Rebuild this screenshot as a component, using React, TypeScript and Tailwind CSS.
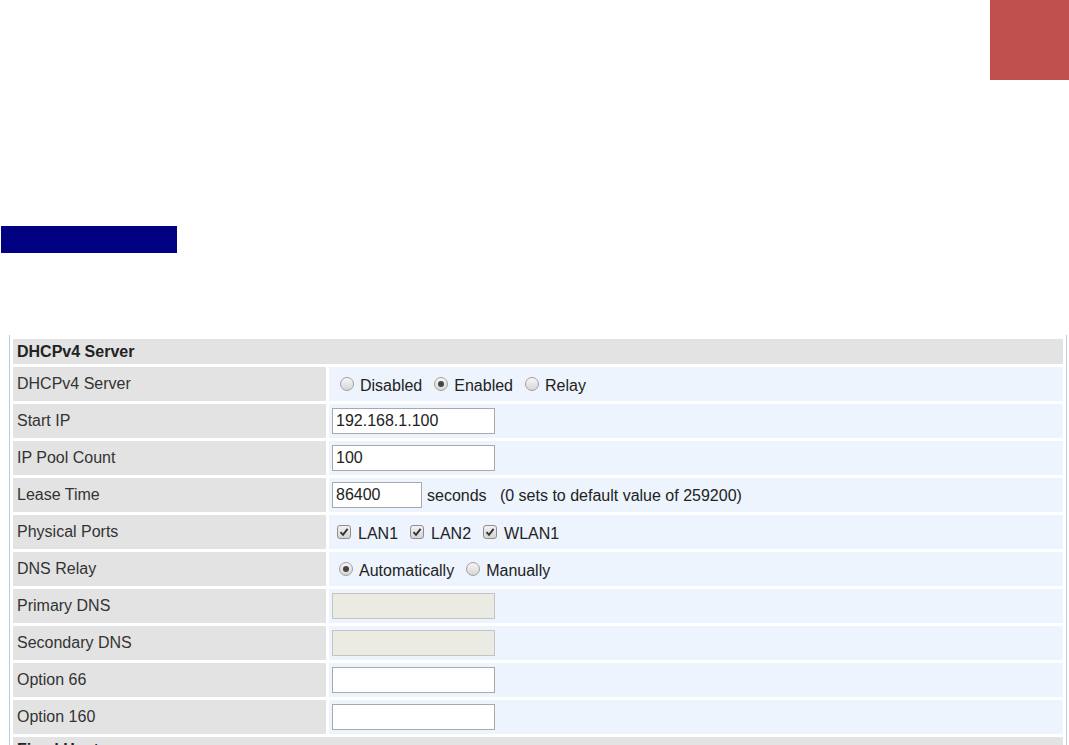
import React from 'react';

const Radio = ({ checked, label }: { checked?: boolean; label: string }) => (
  <span className="flex items-center">
    <span className="w-[14px] h-[14px] rounded-full border border-[#a0a0a0] bg-gradient-to-b from-[#f6f6f6] to-[#d6d6d6] flex items-center justify-center">
      {checked && <span className="w-[6px] h-[6px] rounded-full bg-[#444]" />}
    </span>
    <span className="ml-[6px] mt-[3px]">{label}</span>
  </span>
);

const Check = ({ label }: { label: string }) => (
  <span className="flex items-center">
    <span className="w-[14px] h-[14px] rounded-[3px] border border-[#8f8f8f] bg-gradient-to-b from-[#f2f2f2] to-[#d4d4d4] flex items-center justify-center">
      <svg width="10" height="10" viewBox="0 0 10 10">
        <path d="M1.5 5.2 L4 7.8 L8.6 1.8" fill="none" stroke="#333" strokeWidth="1.9" />
      </svg>
    </span>
    <span className="ml-[7px] mt-[3px]">{label}</span>
  </span>
);

const TextBox = ({ value = '', width = 'w-[163px]', disabled }: { value?: string; width?: string; disabled?: boolean }) => (
  <input
    readOnly
    value={value}
    className={`${width} h-[26px] px-[3px] text-[16px] text-[#222] outline-none border ${
      disabled ? 'bg-[#ebebe4] border-[#c4c4c4]' : 'bg-white border-[#a9a9a9]'
    }`}
  />
);

const rows: { label: string; value: React.ReactNode }[] = [
  {
    label: 'DHCPv4 Server',
    value: (
      <div className="flex items-center gap-[12px] pl-[8px]">
        <Radio label="Disabled" />
        <Radio checked label="Enabled" />
        <Radio label="Relay" />
      </div>
    ),
  },
  { label: 'Start IP', value: <TextBox value="192.168.1.100" /> },
  { label: 'IP Pool Count', value: <TextBox value="100" /> },
  {
    label: 'Lease Time',
    value: (
      <div className="flex items-center">
        <TextBox value="86400" width="w-[90px]" />
        <span className="ml-[5px] mt-[2px] whitespace-pre">seconds   (0 sets to default value of 259200)</span>
      </div>
    ),
  },
  {
    label: 'Physical Ports',
    value: (
      <div className="flex items-center gap-[12px] pl-[5px]">
        <Check label="LAN1" />
        <Check label="LAN2" />
        <Check label="WLAN1" />
      </div>
    ),
  },
  {
    label: 'DNS Relay',
    value: (
      <div className="flex items-center gap-[12px] pl-[7px]">
        <Radio checked label="Automatically" />
        <Radio label="Manually" />
      </div>
    ),
  },
  { label: 'Primary DNS', value: <TextBox disabled /> },
  { label: 'Secondary DNS', value: <TextBox disabled /> },
  { label: 'Option 66', value: <TextBox /> },
  { label: 'Option 160', value: <TextBox /> },
];

export default function App() {
  return (
    <div className="w-[1069px] h-[745px] overflow-hidden bg-white font-['Liberation_Sans',Arial,sans-serif] text-[16px] text-[#333]">
      <div className="flex justify-end">
        <div className="w-[79px] h-[80px] bg-[#c0504d]" />
      </div>

      <div className="mt-[146px] ml-[1px] w-[176px] h-[27px] bg-[#000080]" />

      <div className="mt-[82px] ml-[9px] w-[1058px] border-l border-r border-[#b8cce4] px-[3px] pt-[4px] flex flex-col gap-[3px]">
        <div className="h-[25px] bg-[#e3e3e3] flex items-center pl-[4px] font-bold text-[#222]">DHCPv4 Server</div>
        {rows.map((r) => (
          <div key={r.label} className="grid grid-cols-[313px_1fr] gap-x-[3px] h-[34px]">
            <div className="bg-[#e3e3e3] flex items-center pl-[4px]">{r.label}</div>
            <div className="bg-[#edf4fd] flex items-center pl-[3px] text-[#222]">{r.value}</div>
          </div>
        ))}
        <div className="h-[25px] bg-[#e3e3e3] flex items-center pl-[4px] font-bold text-[#222]">Fixed Host</div>
      </div>
    </div>
  );
}
